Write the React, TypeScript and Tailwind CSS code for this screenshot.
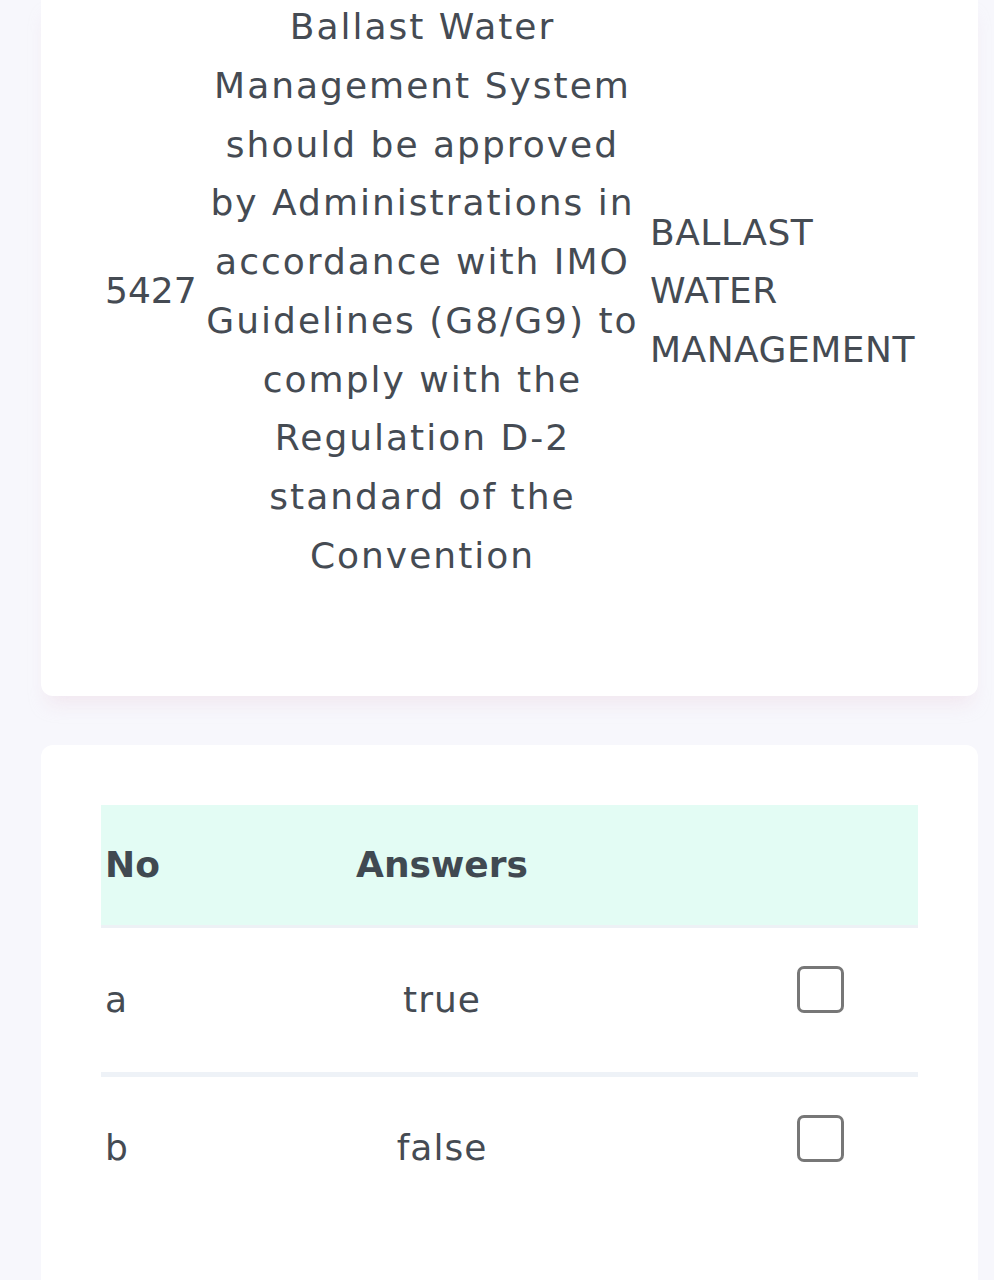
import { type ReactNode } from "react";

const font = { fontFamily: '"DejaVu Sans", "Noto Sans", sans-serif' };

const questionLines = [
  "Ballast Water",
  "Management System",
  "should be approved",
  "by Administrations in",
  "accordance with IMO",
  "Guidelines (G8/G9) to",
  "comply with the",
  "Regulation D-2",
  "standard of the",
  "Convention",
];

function Card({ children, className = "" }: { children: ReactNode; className?: string }) {
  return <div className={`bg-white rounded-xl ${className}`}>{children}</div>;
}

function Checkbox() {
  return <div className="mb-[20px] h-[47px] w-[47px] rounded-[7px] border-[3px] border-[#777777] bg-white" />;
}

function AnswerRow({ no, text, last }: { no: string; text: string; last?: boolean }) {
  return (
    <div
      className={`grid grid-cols-[61px_560px_196px] items-center ${
        last ? "h-[143px]" : "h-[149px] border-b-[5px] border-[#eef2f7]"
      }`}
    >
      <div className="pl-1">{no}</div>
      <div className="text-center tracking-[1px]">{text}</div>
      <div className="flex justify-center">
        <Checkbox />
      </div>
    </div>
  );
}

export default function App() {
  return (
    <div style={font} className="min-h-screen bg-[#f7f7fc] pl-[41px] pr-[16px] text-[#454b53]">
      <Card className="-mt-[2px] rounded-t-none pt-0 pb-[110px] px-[60px] shadow-[0_14px_18px_-6px_rgba(240,225,235,0.7)]">
        <div className="grid grid-cols-[104px_435px_278px] items-center text-[36px] leading-[58.75px]">
          <div className="pl-1">5427</div>
          <div className="text-center whitespace-nowrap tracking-[2px]">
            {questionLines.map((l) => (
              <div key={l}>{l}</div>
            ))}
          </div>
          <div className="pl-[10px] tracking-[0.5px]">
            BALLAST
            <br />
            WATER
            <br />
            MANAGEMENT
          </div>
        </div>
      </Card>

      <Card className="mt-[49px] min-h-[560px] px-[60px] pt-[60px]">
        <div className="text-[36px]">
          <div className="grid h-[123px] grid-cols-[61px_560px_196px] items-center border-b-[3px] border-[#edf1f5] bg-[#e3fcf4] font-bold text-[#404951]">
            <div className="pl-1">No</div>
            <div className="text-center">Answers</div>
            <div />
          </div>
          <AnswerRow no="a" text="true" />
          <AnswerRow no="b" text="false" last />
        </div>
      </Card>
    </div>
  );
}
